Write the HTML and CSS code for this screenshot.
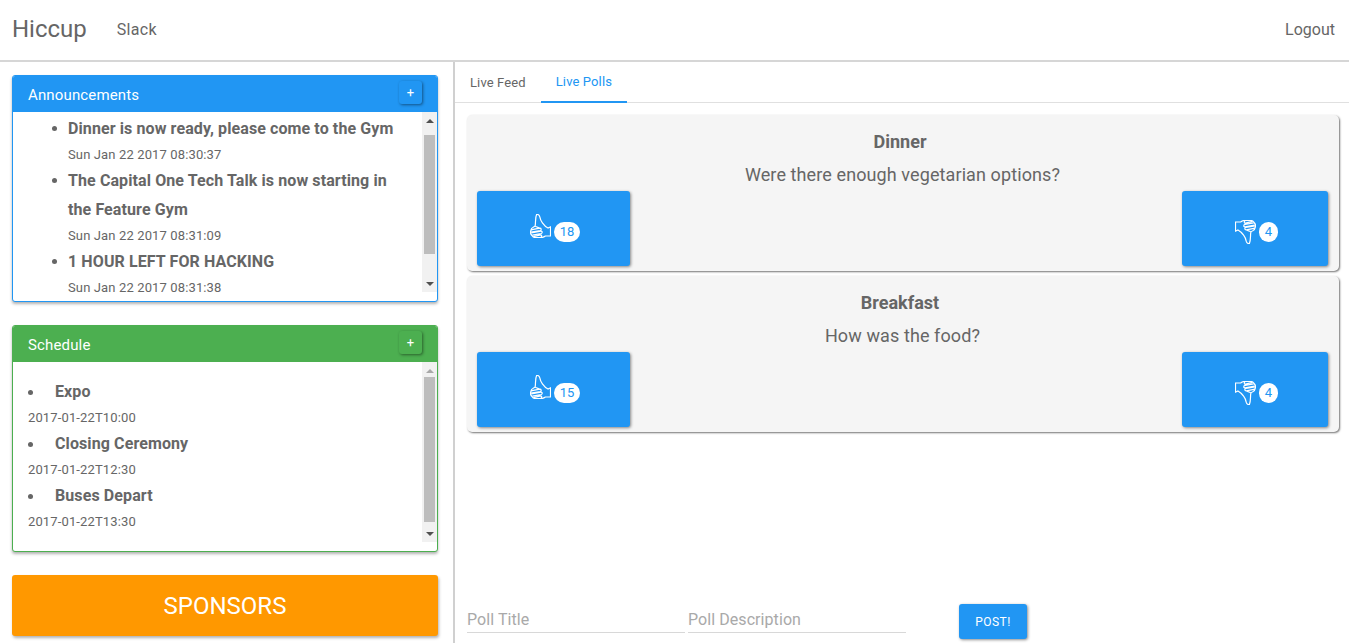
FILE: index.html
```html
<!DOCTYPE html>
<html lang="en">
<head>
<meta charset="utf-8">
<title>Hiccup</title>
<link rel="stylesheet" href="styles.css">
</head>
<body>
<svg class="defs" width="0" height="0" aria-hidden="true">
  <symbol id="thumb" viewBox="0 0 21 24">
    <path d="M6.6.6C8.2.2 9.4 1.2 9.8 2.8C10.2 5 11 7 12.4 8.8C14 11 16 13 18 14L20.5 12.8V22H15.4C14 23 12.6 23.6 11 23.6H5.6C4 23.6 2.8 23 2.2 21.8C.6 20.4.2 18.4.8 16.6C1 15 1.8 13.8 3.2 13.2C4.2 12.8 5 12.4 5.2 11.6C5.8 8.4 5 4 6.6.6Z"/>
    <path d="M1 15.8L9.6 14.2C11.4 14 11.8 16.2 10.2 16.6L1 18M1.4 19L10.8 17.2C12.6 17 12.8 19.2 11 19.6L2.4 21.2M3.4 22.6L10.6 20.8C12 20.8 12.2 22.6 10.8 23.2M5.2 12.2C7 13.2 9 13.6 10.6 14.6"/>
  </symbol>
</svg>
<header class="navbar">
  <a class="brand">Hiccup</a>
  <a class="nav-link nav-slack">Slack</a>
  <a class="nav-link nav-right">Logout</a>
</header>
<div class="layout">
  <aside class="sidebar">
    <section class="panel panel-blue">
      <div class="panel-head"><span class="panel-title">Announcements</span><button class="mini-btn">+</button></div>
      <div class="panel-body">
        <div class="scroll-content">
          <ul class="news">
            <li><strong>Dinner is now ready, please come to the Gym</strong><small>Sun Jan 22 2017 08:30:37</small></li>
            <li><strong>The Capital One Tech Talk is now starting in the Feature Gym</strong><small>Sun Jan 22 2017 08:31:09</small></li>
            <li><strong>1 HOUR LEFT FOR HACKING</strong><small>Sun Jan 22 2017 08:31:38</small></li>
          </ul>
        </div>
        <div class="scrollbar">
          <i class="arrow arrow-up"></i>
          <div class="track"><div class="thumb thumb-news"></div></div>
          <i class="arrow arrow-down"></i>
        </div>
      </div>
    </section>
    <section class="panel panel-green">
      <div class="panel-head"><span class="panel-title">Schedule</span><button class="mini-btn">+</button></div>
      <div class="panel-body">
        <div class="scroll-content">
          <ul class="events">
            <li><strong>Expo</strong><small>2017-01-22T10:00</small></li>
            <li><strong>Closing Ceremony</strong><small>2017-01-22T12:30</small></li>
            <li><strong>Buses Depart</strong><small>2017-01-22T13:30</small></li>
          </ul>
        </div>
        <div class="scrollbar">
          <i class="arrow arrow-up arrow-dim"></i>
          <div class="track"><div class="thumb thumb-events"></div></div>
          <i class="arrow arrow-down"></i>
        </div>
      </div>
    </section>
    <a class="sponsors">SPONSORS</a>
  </aside>
  <main class="content">
    <nav class="tabs">
      <a class="tab">Live Feed</a>
      <a class="tab tab-active">Live Polls</a>
    </nav>
    <div class="polls">
      <article class="poll">
        <h3>Dinner</h3>
        <p>Were there enough vegetarian options?</p>
        <div class="poll-actions">
          <button class="vote vote-up"><svg class="icon"><use href="#thumb"/></svg><span class="badge">18</span></button>
          <button class="vote vote-down"><svg class="icon icon-down"><use href="#thumb"/></svg><span class="badge">4</span></button>
        </div>
      </article>
      <article class="poll">
        <h3>Breakfast</h3>
        <p>How was the food?</p>
        <div class="poll-actions">
          <button class="vote vote-up"><svg class="icon"><use href="#thumb"/></svg><span class="badge">15</span></button>
          <button class="vote vote-down"><svg class="icon icon-down"><use href="#thumb"/></svg><span class="badge">4</span></button>
        </div>
      </article>
    </div>
    <form class="poll-form">
      <input class="field" type="text" placeholder="Poll Title">
      <input class="field" type="text" placeholder="Poll Description">
      <button class="post" type="button">POST!</button>
    </form>
  </main>
</div>
</body>
</html>
```
FILE: styles.css
```css
* { box-sizing: border-box; }
html, body { margin: 0; height: 643px; overflow: hidden; }
body { font-family: Roboto, "Liberation Sans", sans-serif; color: #666; background: #fff; }
.defs { display: block; height: 0; }

.navbar { height: 62px; display: flex; align-items: center; padding: 0 14px 1px 12px; border-bottom: 2px solid #d6d6d6; }
.brand { font-size: 24px; color: #666; margin: 0 30px 2px 0; }
.nav-link { font-size: 16px; color: #666; }
.nav-slack { letter-spacing: .3px; }
.nav-right { margin-left: auto; }

.layout { display: flex; height: 581px; }
.sidebar { width: 455px; flex: none; border-right: 2px solid #d0d0d0; padding: 13px 15px 0 12px; }

.panel { height: 227px; margin-bottom: 23px; border: 1px solid; border-radius: 3px; box-shadow: 0 2px 3px rgba(0,0,0,.3); background: #fff; overflow: hidden; }
.panel-blue { border-color: #2196f3; }
.panel-green { border-color: #4caf50; }
.panel-head { height: 36px; display: flex; align-items: center; justify-content: space-between; padding: 0 15px; color: #fff; font-size: 15px; }
.panel-title { padding-top: 2px; letter-spacing: .15px; }
.panel-blue .panel-head { background: #2196f3; }
.panel-green .panel-head { background: #4caf50; }
.mini-btn { width: 23px; height: 23px; margin-top: -3px; padding: 0; border: 0; border-radius: 3px; color: #fff; font: 13px Roboto, sans-serif; box-shadow: 1px 1px 3px rgba(0,0,0,.45); }
.panel-blue .mini-btn { background: #2196f3; }
.panel-green .mini-btn { background: #4caf50; }
.panel-body { height: 180px; display: flex; }
.scroll-content { flex: 1; min-width: 0; height: 180px; padding: 0 15px; }

ul { list-style: none; margin: 0; padding: 0; }
strong { display: block; font-size: 16px; font-weight: 700; line-height: 29px; letter-spacing: .1px; color: #666; }
small { display: block; font-size: 13px; line-height: 23px; letter-spacing: .13px; color: #666; }
.news { padding: 2px 0 0 40px; }
.news li { position: relative; }
.news li::before { content: ""; position: absolute; left: -16px; top: 12px; width: 5px; height: 5px; border-radius: 50%; background: #666; }
.events { padding-top: 15px; }
.events strong { display: flex; align-items: center; }
.events strong::before { content: ""; width: 5px; height: 5px; margin: 2px 22px 0 0; border-radius: 50%; background: #666; }

.scrollbar { width: 15px; height: 180px; flex: none; display: flex; flex-direction: column; background: #f1f1f1; }
.track { flex: 1; padding: 0 2px; display: flex; flex-direction: column; }
.thumb { background: #bdbdbd; width: 11px; }
.thumb-news { margin-top: 6px; height: 119px; }
.thumb-events { margin-top: -2px; height: 145px; }
.arrow { height: 17px; flex: none; display: flex; align-items: center; justify-content: center; }
.arrow::after { content: ""; border-left: 4px solid transparent; border-right: 4px solid transparent; }
.arrow-up::after { border-bottom: 4px solid #505050; }
.arrow-down::after { border-top: 4px solid #505050; }
.arrow-dim::after { border-bottom-color: #a8a8a8; }

.sponsors { display: flex; height: 61px; align-items: center; justify-content: center; border-radius: 3px; background: #ff9800; color: #fff; font-size: 24px; box-shadow: 1px 2px 3px rgba(0,0,0,.3); }

.content { flex: 1; min-width: 0; display: flex; flex-direction: column; }
.tabs { height: 41px; flex: none; display: flex; border-bottom: 1px solid #e0e0e0; }
.tab { height: 41px; padding: 0 15px; display: flex; align-items: center; font-size: 13px; letter-spacing: .12px; color: #666; }
.tab-active { color: #2196f3; border-bottom: 2px solid #2196f3; }

.polls { flex: 1; padding: 12px 10px 0 12px; }
.poll { height: 156px; margin-bottom: 5px; padding: 17px 11px 0 10px; border-radius: 5px; background: #f5f5f5; box-shadow: 1px 1px 2px rgba(0,0,0,.55); text-align: center; }
.poll h3 { margin: 0; padding-right: 5px; font-size: 18px; line-height: 20px; font-weight: 700; color: #666; }
.poll p { margin: 13px 0 6px; font-size: 18px; line-height: 20px; letter-spacing: .1px; color: #666; }
.poll-actions { display: flex; justify-content: space-between; }
.vote { height: 75px; display: flex; align-items: center; justify-content: center; padding: 0 0 0 3px; border: 0; border-radius: 3px; background: #2196f3; box-shadow: 1px 1px 3px rgba(0,0,0,.45); }
.vote-up { width: 153px; }
.vote-down { width: 146px; }
.icon { width: 21px; height: 24px; fill: none; stroke: #fff; stroke-width: 1.2; margin: -5px 3px 0 0; }
.icon-down { transform: rotate(180deg); margin: 7px 3px 0 0; }
.badge { min-width: 18px; height: 20px; margin-top: 7px; padding: 0 5.5px; border-radius: 10px; background: #fff; color: #2196f3; font-size: 13px; line-height: 20px; text-align: center; font-family: Roboto, sans-serif; }

.poll-form { height: 51px; flex: none; display: flex; align-items: flex-start; padding: 14px 0 0 12px; }
.field { width: 218px; height: 27px; margin-right: 3px; padding: 0; border: 0; border-bottom: 1px solid #d8d8d8; outline: 0; background: transparent; font: 16px Roboto, sans-serif; letter-spacing: .07px; color: #666; }
.field::placeholder { color: #a9a9a9; opacity: 1; }
.post { width: 68px; height: 35px; margin: -2px 0 0 50px; padding: 0; border: 0; border-radius: 3px; background: #2196f3; color: #fff; font: 12px Roboto, sans-serif; letter-spacing: .5px; box-shadow: 1px 1px 3px rgba(0,0,0,.45); }
```
